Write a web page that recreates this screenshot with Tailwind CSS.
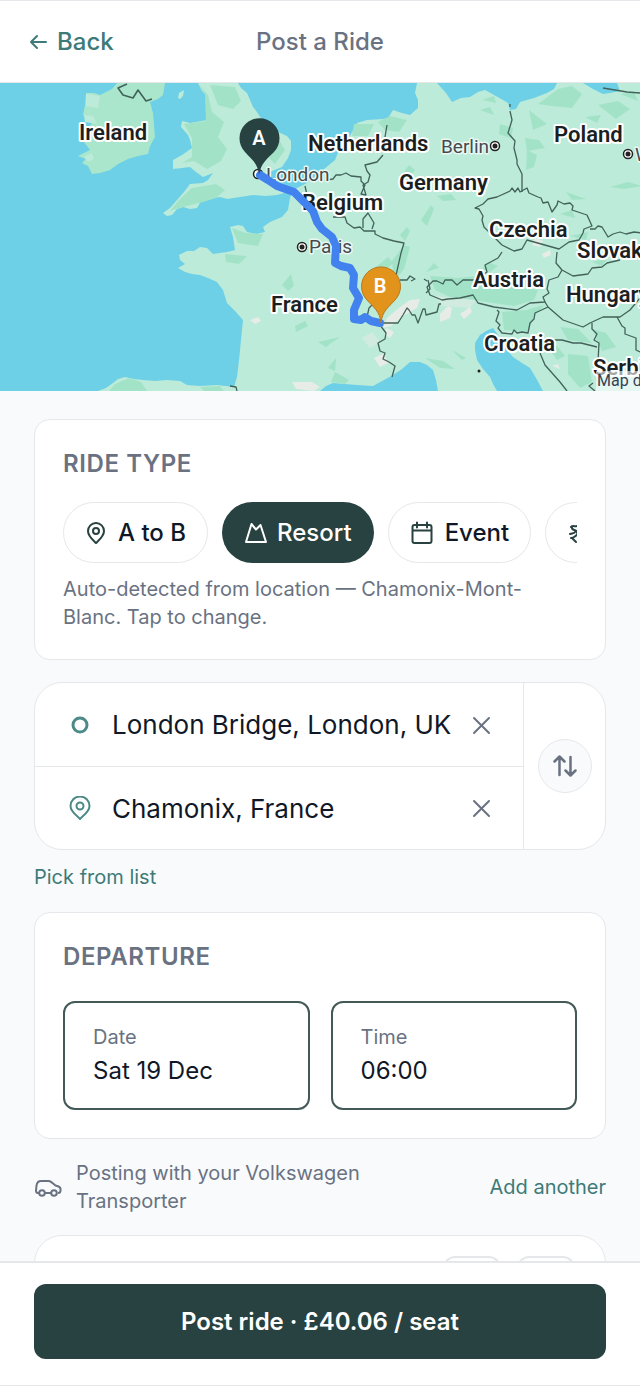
<!doctype html>
<html lang="en">

<head>
    <meta charset="utf-8">
    <meta name="viewport" content="width=device-width, initial-scale=1">
    <title>Post a Ride</title>
    <script src="https://cdn.jsdelivr.net/npm/@tailwindcss/browser@4"></script>
</head>
<body class="font-['Inter',sans-serif] bg-slate-50 text-gray-900 antialiased">
    <div class="flex flex-col h-screen overflow-hidden">
        <header class="grid grid-cols-3 items-center shrink-0 h-[83px] px-7 bg-white border-y border-gray-200">
            <a href="#" class="flex items-center gap-2 text-2xl font-medium text-[#3d7a78]">
                <svg class="size-[21px]" viewBox="0 0 21 21" fill="none" stroke="currentColor" stroke-width="2" stroke-linecap="round" stroke-linejoin="round" aria-hidden="true"><path d="M18 11H3M9 5l-6 6 6 6" /></svg>
                Back
            </a>
            <h1 class="text-2xl font-medium text-gray-500 text-center">Post a Ride</h1>
        </header>

        <main class="flex-1 min-h-0 overflow-hidden">
            <section class="relative h-[308px] overflow-hidden bg-[#6dd0e7]" aria-label="Route map">
                <svg class="block w-full h-full" viewBox="0 83 640 308" preserveAspectRatio="xMidYMid slice" font-family="Roboto, sans-serif">
                    <!-- land -->
                    <g fill="#bcebd9">
                        <path fill="#a9e6cc" d="M117 83L112 89 100 95 94 93 86 93 85 105 83 115 92 123 86 131 84 142 90 150 78 156 86 159 82 163 88 166 92 174 100 173 110 170 118 164 128 159 138 156 148 154 150 146 155 137 154 125 153 113 150 102 158 99 163 95 165 83z" />
                        <path d="M178 98L179 93 184 90 183 96 180 99z" />
                        <path d="M198 83L202 91 208 97 209 108 207 120 190 123 182 121 181 127 188 135 190 140 192 148 182 155 173 160 173 169 182 168 190 167 196 172 203 177 213 173 208 180 203 183 190 184 184 192 177 200 170 208 163 213 167 216 172 215 177 209 183 207 190 209 197 208 201 201 207 199 220 197 227 199 240 197 253 195 265 196 277 195 284 193 288 190 284 184 270 181 262 176 272 171 282 167 288 158 291 150 291 141 287 136 278 132 270 131 263 130 265 122 260 117 257 112 253 107 247 93 241 88 238 83z" />
                        <path d="M417 83L415 93 418 100 418 108 410 115 402 113 393 110 388 118 383 119 367 120 357 123 350 136 340 147 337 155 335 160 323 170 307 183 293 190 290 198 288 210 282 217 270 222 263 227 265 232 256 234 247 232 243 226 238 225 230 227 233 237 235 250 227 252 220 253 213 254 207 248 200 247 194 251 187 251 179 255 180 260 185 264 178 268 185 272 192 274 200 275 208 278 217 282 223 290 227 303 235 311 243 320 241 340 239 360 237 377 234 387 217 385 200 386 187 385 180 381 167 380 155 381 143 380 134 379 125 377 118 379 113 383 106 388 98 391 320 391 326 386 333 383 345 384 357 385 373 386 384 380 393 375 402 369 410 362 420 362 427 365 433 370 436 380 438 391 497 391 493 384 490 377 483 369 477 360 475 350 475 343 480 335 486 331 493 328 498 335 504 346 513 357 522 363 530 368 536 378 543 391 640 391 640 83 617 83 620 91 610 93 603 94 593 89 583 83 557 83 554 89 547 93 534 98 520 102 516 109 510 110 508 103 503 100 494 95 485 90 478 92 470 97 461 98 452 102 446 93 437 83z" />
                    </g>
                    <!-- woodland -->
                    <g fill="#a2e3c8">
                        <path d="M198 83l10 12 4 17 12 10-6 15 9 12-6 12-14 8-13-8-12 2 10-6 0-19-8-14 22-3-1-27zM170 211l9-11 13-12 24-4 9 6-9 8-13 4-20 5z" />
                        <path d="M210 85l25 2 6 14-8 8-15-4zM264 138l15 2 6 10-10 14-8-8zM232 228l14 5 17 1-5 12-20-3zM225 254l22 2-8 8-13-2z" />
                        <path d="M378 122l12-6 17 4-8 12-14-2zM401 176l8-11 6 5-8 11zM392 261l12-16 6 2-6 22-10 12zM400 235l7-8 3 4-5 10zM376 267l12-10 5 6-12 12z" />
                        <path d="M354 124l20 0-6 12-16 0zM282 285l9-11 3 12-6 5zM295 326l10-5 3 5-12 6zM328 368l8-10-1 13zM318 342l22-5-14 10zM335 372l14 8-4 4-14-2zM285 308l9-4-2 10z" />
                        <path d="M529 110l10 8 8 6-14 6zM538 104l20-15 14-3 10 8-10 14-20-2zM500 124l13 4-2 10-12-4zM480 110l10-3 4 8zM525 138l14 2 6 8-18 3zM598 105l20-4 12 8-14 10zM585 117l16-2-4 8zM527 150l10 5-3 12-8 3zM482 100l12-4 2 7zM620 94l14-2 4 9z" />
                        <path d="M488 262l10 4-8 6-8-3zM426 272l8-9 5 5zM421 220l10-15 3 4-7 17zM437 196l14-2 5 6-13 1zM566 192l20 7-14 1zM610 187l18-5 14 4-18 3zM560 214l12-4 3 8z" />
                        <path d="M430 276l28 2 18-2 20 8 42 6-4 10-20 6-34-5-30-4-15-7zM502 312l24-2 18-5-10 12-6 15-24-2zM560 327l18 2 14 14-24-3zM545 343l12 3 8 10-8 4zM568 354l20 2 4 26-12 6-12-14zM570 236l18-4-2 8zM592 262l16-4-6 8z" />
                        <path d="M592 329l14 4 10 14-14 4zM425 358l18 3 12 8-15-1zM452 350l14 8-4 2zM115 384l14-6 12 4 6 9h-38zM200 387l20-1 4 5h-20z" />
                    </g>
                    <g fill="#bcebd9"><path d="M86 94l14 2-2 12-12-2zM84 115l9 1 4 8-12-2zM84 157l8-4 2 6-6 3z" /></g>
                    <!-- alps and bare ground -->
                    <g fill="#e7ece7">
                        <path d="M400 307l10-7 10-1 -3 9-14 8-12 10-8 2 4-10zM386 328l8 4-4 6-5-3zM374 358l10-5 4 10-8 4zM440 314l8-8 4 2-2 10-10 4zM460 314l10-7 2 5-8 7zM535 238l8 3-3 6-8-2zM542 254l8-4 1 5-7 3zM292 382l20 0 8 5-6 4-18-2zM250 320l8-3 3 4-6 3zM552 366l6-2 2 5z" />
                        <path d="M362 338l10-6 8 10-10 6zM436 296l40 4-6 8-28-2z" opacity=".5" />
                    </g>
                    <!-- borders -->
                    <g fill="none" stroke="#42625a" stroke-width="1.3" stroke-linejoin="round">
                        <path stroke-width="1.600" d="M127 84l-9 4 5 7 10 3 5-8 8 11 6-2" />
                        <path d="M510 104v3M510 111l2 9-4 13 7 8-1 7 3 12 0 4 5 10 0 18M603 88l24 4 13 1" />
                        <path d="M475 208l8-4 5-5 9-2 13-6 2-3 3 4 3-4 2 4 7-4 2 5 9 4 3 1 2 5 5-1 4 10 5-7 1-4 6 3 6-1 3 3-1 4 15 5 5 11-8 3-1 4-4 7-10 2-10 7-32-9-5 9-8 2-12-6-18-18-2-7 1-4-4-7z" />
                        <path d="M590 229l5 0 3-3 4 1 6 10 5-3 7-2 6 2 8-2 8 1M557 252l-1 11 6 7 11 6 15-2 4-6 10-1 5-4 13-3" />
                        <path d="M502 252l-4 6-13 7 2 7-12 8-12 0-6 5-5-5-7 0-2 4-6-3-4 0-6 6 3 8 12 5 6-1 12-1 13-3 5 8 16 4 23 3 13-7 15-1-2-5 6-4-2-4 2-9 9-3 4-7" />
                        <path d="M383 323h15l5-8 4-7 2 2 3 5 3 0 3 8 5-14 2 0 1 6 11-3 2-8 2 0M400 280l7 0 3-4 5 3-4 2M427 281l-3-2M428 280l2 9-4 4" />
                        <path d="M545 302l3 5 15 13 20 7 7-4 13-6 17 0 10-7 10-12M548 307l-13 6-1 6-4 4-2 10-6-1-5 1-3-3-2 4-10-1-4-5 2-3-4-4 3-9-2-2" />
                        <path d="M540 353l5 12 15 17 7 9M553 340l9 0 11 3 8 0 16 4M592 323l0 6 5 5-3 6 5 3-1 19-3 2M617 317l5 9 3 2 0 6 11 4 0 12 4 2M595 391l-6-5 4-3" />
                        <path d="M387 125l-2 12M383 155l-6 7-12 3 2 6 3 4-2 7-5 3 3 10-5-1 4-9-4-4 0-4-10-1-5-3-5 2-5 0-3 4-7 1" />
                        <path d="M305 186l2 9M333 217l12 0 2 6 7 5 6-1 4 4 11 0 0 3 8 4 11 3 10 2-3 10-6 27M363 228l0-9 5-6 6 10-2 6" />
                        <path d="M380 325l6 8-1 6-7 4 2 8 5 2-2 6 6 3 6 4-3 11M367 317l2-9 4-4M230 386l6 1 1 4" />
                    </g>
                    <!-- cities -->
                    <g fill="#fff" stroke="#222" stroke-width="1.5">
                        <circle cx="302" cy="247" r="4.5" /><circle cx="495" cy="146" r="4.5" /><circle cx="628" cy="154" r="4.5" /><circle cx="258" cy="174" r="4.5" />
                    </g>
                    <g fill="#222"><circle cx="302" cy="247" r="2.500" /><circle cx="495" cy="146" r="2.500" /><circle cx="628" cy="154" r="2.500" /><circle cx="479" cy="371" r="1.500" /></g>
                    <g fill="#444b4f" stroke="#e9f8f2" stroke-width="3" stroke-linejoin="round" paint-order="stroke" font-size="19">
                        <text x="266" y="181">London</text>
                        <text x="309" y="253">Paris</text>
                        <text x="441" y="153">Berlin</text>
                        <text x="635" y="161">Warsaw</text>
                    </g>
                    <g fill="#1c1f21" stroke="#fff" stroke-width="4" stroke-linejoin="round" paint-order="stroke" font-size="22" font-weight="600">
                        <text x="79" y="140">Ireland</text>
                        <text x="308" y="151">Netherlands</text>
                        <text x="399" y="190">Germany</text>
                        <text x="302" y="210">Belgium</text>
                        <text x="271" y="312">France</text>
                        <text x="554" y="142">Poland</text>
                        <text x="489" y="237">Czechia</text>
                        <text x="577" y="258">Slovakia</text>
                        <text x="473" y="287">Austria</text>
                        <text x="566" y="302">Hungary</text>
                        <text x="484" y="351">Croatia</text>
                        <text x="593" y="375">Serbia</text>
                    </g>
                    <!-- route -->
                    <path fill="none" stroke="#4182ee" stroke-width="8" stroke-linecap="round" stroke-linejoin="round" d="M260 175L268 180 277 186 294 192 305 203 313 211 317 222 322 229 332 237 336 246 335 263 341 266 350 268 354 275 353 288 359 298 354 310 354 319 361 320 365 317 371 321 380 323" />
                    <path fill="#284141" d="M259 175c-1-12-8-16-14-23a20 20 0 1 1 29 0c-7 7-13 11-15 23z" />
                    <path fill="#e2931c" stroke="#b8791c" stroke-width="1" d="M381 323c-1-12-8-16-14-23a19.500 19.500 0 1 1 28 0c-6 7-13 11-14 23z" />
                    <g fill="#fff" font-size="20" font-weight="600" text-anchor="middle"><text x="259" y="145">A</text><text x="380" y="293">B</text></g>
                </svg>
                <span class="absolute bottom-0 left-[596px] px-px bg-white/60 font-['Roboto',sans-serif] text-base leading-5 whitespace-nowrap text-gray-700">Map data ©2026</span>
            </section>

            <div class="flex flex-col px-[34px] pt-7">
                <section class="px-7 pt-[30px] pb-7 bg-white border border-gray-200 rounded-2xl">
                    <h2 class="text-2xl leading-7 font-semibold tracking-wide text-gray-500">RIDE TYPE</h2>
                    <div class="flex gap-[14px] mt-6 overflow-hidden">
                        <button type="button" class="flex items-center gap-[11px] shrink-0 h-[61px] px-[21px] border border-gray-200 rounded-full text-2xl font-medium">
                            <svg class="size-[22px]" viewBox="0 0 22 22" fill="none" stroke="#284141" stroke-width="2" stroke-linecap="round" stroke-linejoin="round" aria-hidden="true"><path d="M11 21c-2-2-8-6.500-8-12a8 8 0 0 1 16 0c0 5.500-6 10-8 12z" /><circle cx="11" cy="9" r="3" /></svg>
                            A to B
                        </button>
                        <button type="button" aria-pressed="true" class="flex items-center gap-[9px] shrink-0 h-[61px] px-[22px] bg-[#284141] rounded-full text-2xl font-medium text-white">
                            <svg class="size-6" viewBox="0 0 24 24" fill="none" stroke="currentColor" stroke-width="2" stroke-linecap="round" stroke-linejoin="round" aria-hidden="true"><path d="M7.500 3l4.500 5.500L16.500 4 22 21H2L7.500 3z" /></svg>
                            Resort
                        </button>
                        <button type="button" class="flex items-center gap-[11px] shrink-0 h-[61px] px-[21px] border border-gray-200 rounded-full text-2xl font-medium">
                            <svg class="size-6" viewBox="0 0 24 24" fill="none" stroke="#284141" stroke-width="2" stroke-linecap="round" stroke-linejoin="round" aria-hidden="true"><rect x="2.500" y="4" width="19" height="18" rx="2" /><path d="M7 1.500v5M17 1.500v5M3 9.500h18" /></svg>
                            Event
                        </button>
                        <button type="button" class="flex items-center gap-[11px] shrink-0 h-[61px] px-[22px] border border-gray-200 rounded-full text-2xl font-medium">
                            <svg class="size-6" viewBox="0 0 24 24" fill="none" stroke="#284141" stroke-width="2" stroke-linecap="round" stroke-linejoin="round" aria-hidden="true"><path d="M3 6c2-2 4 0 6-1M4 6c-1 4 4 2 5 5M2 13c3-1 4 0 6-3M3 17c3 0 4-2 6-3M4 17l4 4M9 12c4 0 6 3 12 3" /></svg>
                            Trail
                        </button>
                    </div>
                    <p class="mt-3 text-xl leading-7 text-gray-500">Auto-detected from location — Chamonix-Mont-Blanc. Tap to change.</p>
                </section>

                <section class="flex mt-[22px] bg-white border border-gray-200 rounded-[28px] overflow-hidden">
                    <div class="flex-1 min-w-0">
                        <div class="flex items-center h-[84px] pl-[33px] pr-[30px] border-b border-gray-200">
                            <label for="from" class="shrink-0 mr-5" aria-label="From">
                                <svg class="size-6" viewBox="0 0 24 24" fill="none" stroke="#4b8a87" stroke-width="3" aria-hidden="true"><circle cx="12" cy="12" r="7" /></svg>
                            </label>
                            <input id="from" type="text" value="London Bridge, London, UK" class="flex-1 min-w-0 text-[26px] outline-none">
                            <button type="button" aria-label="Clear start" class="text-gray-500">
                                <svg class="size-6" viewBox="0 0 24 24" fill="none" stroke="currentColor" stroke-width="2" stroke-linecap="round" aria-hidden="true"><path d="M5 5l15 15M20 5L5 20" /></svg>
                            </button>
                        </div>
                        <div class="flex items-center h-[82px] pl-[33px] pr-[30px]">
                            <label for="to" class="shrink-0 mr-5" aria-label="To">
                                <svg class="size-6" viewBox="0 0 24 24" fill="none" stroke="#4b8a87" stroke-width="2" stroke-linejoin="round" aria-hidden="true"><path d="M12 23c-2.500-3-9.500-7-9.500-13a9.500 9.500 0 0 1 19 0c0 6-7 10-9.500 13z" /><circle cx="12" cy="10" r="3.500" /></svg>
                            </label>
                            <input id="to" type="text" value="Chamonix, France" class="flex-1 min-w-0 text-[26px] outline-none">
                            <button type="button" aria-label="Clear destination" class="text-gray-500">
                                <svg class="size-6" viewBox="0 0 24 24" fill="none" stroke="currentColor" stroke-width="2" stroke-linecap="round" aria-hidden="true"><path d="M5 5l15 15M20 5L5 20" /></svg>
                            </button>
                        </div>
                    </div>
                    <div class="flex items-center justify-center w-[82px] border-l border-gray-200">
                        <button type="button" aria-label="Swap start and destination" class="flex items-center justify-center size-[54px] bg-slate-50 border border-gray-200 rounded-full text-gray-500">
                            <svg class="size-6" viewBox="0 0 24 24" fill="none" stroke="currentColor" stroke-width="2.500" stroke-linecap="round" stroke-linejoin="round" aria-hidden="true"><path d="M6.500 21V3M1.500 7.500l5-5 5 5M17.500 3v18M12.500 16.500l5 5 5-5" /></svg>
                        </button>
                    </div>
                </section>

                <a href="#" class="self-start mt-[13px] text-xl leading-7 text-[#3d7a78]">Pick from list</a>

                <section class="mt-[21px] px-7 pt-[30px] pb-7 bg-white border border-gray-200 rounded-2xl">
                    <h2 class="text-2xl leading-7 font-semibold tracking-wide text-gray-500">DEPARTURE</h2>
                    <div class="grid grid-cols-2 gap-[21px] mt-[30px]">
                        <div class="flex flex-col h-[109px] px-7 pt-5 border-2 border-[#435958] rounded-xl">
                            <label for="date" class="text-xl leading-7 text-gray-500">Date</label>
                            <input id="date" type="text" value="Sat 19 Dec" class="w-full mt-0.5 text-2xl leading-9 outline-none">
                        </div>
                        <div class="flex flex-col h-[109px] px-7 pt-5 border-2 border-[#435958] rounded-xl">
                            <label for="time" class="text-xl leading-7 text-gray-500">Time</label>
                            <input id="time" type="text" value="06:00" class="w-full mt-0.5 text-2xl leading-9 outline-none">
                        </div>
                    </div>
                </section>

                <div class="flex items-center mt-5 text-xl leading-7 text-gray-500">
                    <svg class="shrink-0 w-7 h-6 mr-[14px]" viewBox="0 0 28 24" fill="none" stroke="currentColor" stroke-width="2" stroke-linejoin="round" aria-hidden="true"><path d="M5 18H4c-1.500 0-2-1-2-2.500l.5-5C3 7.500 4.500 6 7 6h7.500c1.500 0 2.500.5 4 2l3 2.500 2.500.8c1.500.5 2.500 1.500 2.500 3v1.200c0 1.500-1 2.500-2.500 2.500M11 18h6" /><circle cx="8" cy="18" r="2.800" /><circle cx="20" cy="18" r="2.800" /></svg>
                    <p class="w-[330px]">Posting with your Volkswagen Transporter</p>
                    <a href="#" class="ml-auto text-[#3d7a78]">Add another</a>
                </div>

                <section class="flex justify-end gap-4 h-[170px] mt-5 px-[30px] pt-5 bg-white border border-gray-200 rounded-[28px]">
                    <button type="button" aria-label="Fewer seats" class="size-[58px] border-2 border-gray-200 rounded-xl"></button>
                    <button type="button" aria-label="More seats" class="size-[58px] border-2 border-gray-200 rounded-xl"></button>
                </section>
            </div>
        </main>

        <footer class="shrink-0 px-[34px] pt-[21px] pb-[26px] bg-white border-t-2 border-b border-gray-200">
            <button type="button" class="w-full h-[75px] bg-[#284141] rounded-xl text-2xl font-semibold text-white">Post ride · £40.06 / seat</button>
        </footer>
    </div>
</body>
</html>
